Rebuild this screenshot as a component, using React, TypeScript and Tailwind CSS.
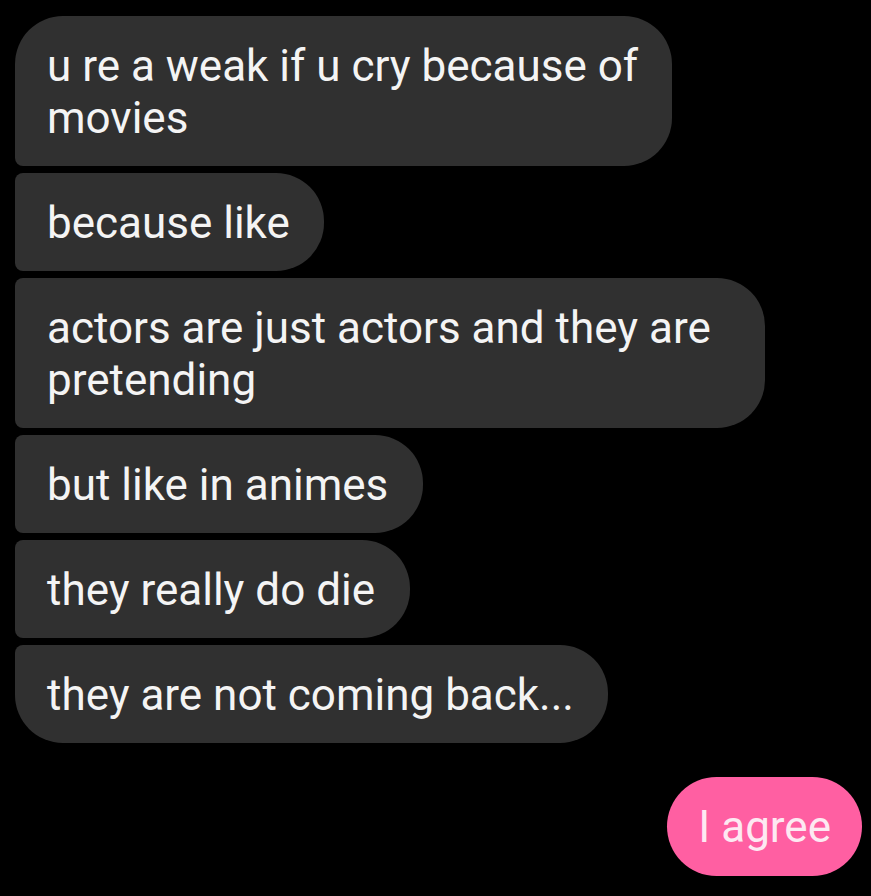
const incoming = [
  { lines: ['u re a weak if u cry because of', 'movies'], pos: 'first', pr: 'pr-[34px]' },
  { lines: ['because like'], pos: 'mid', pr: 'pr-[34px]' },
  { lines: ['actors are just actors and they are', 'pretending'], pos: 'mid', pr: 'pr-[54px]' },
  { lines: ['but like in animes'], pos: 'mid', pr: 'pr-[35px]' },
  { lines: ['they really do die'], pos: 'mid', pr: 'pr-[35px]' },
  { lines: ["they are not coming back..."], pos: 'last', pr: 'pr-[34px]' },
];

const corners: Record<string, string> = {
  first: 'rounded-tl-[48px] rounded-r-[48px] rounded-bl-[8px]',
  mid: 'rounded-l-[8px] rounded-r-[48px]',
  last: 'rounded-tl-[8px] rounded-r-[48px] rounded-bl-[48px]',
};

export default function App() {
  return (
    <div
      className="min-h-[896px] w-[871px] bg-black px-[15px] pt-[16px]"
      style={{ fontFamily: 'Roboto, "Noto Sans", sans-serif' }}
    >
      <div className="flex flex-col items-start gap-[7px]">
        {incoming.map((m, i) => (
          <div
            key={i}
            className={`w-fit bg-[#303030] pl-[32px] ${m.pr} pt-[24px] pb-[22px] text-[44px] leading-[52px] text-[#f4f4f4] ${corners[m.pos]}`}
          >
            {m.lines.map((l, j) => (
              <div key={j} className="whitespace-nowrap">
                {l}
              </div>
            ))}
          </div>
        ))}
      </div>
      <div className="mt-[34px] flex justify-end">
        <div className="mr-[-6px] rounded-full bg-[#ff5fa2] px-[31px] pt-[24px] pb-[23px] text-[44px] leading-[52px] text-[#fde9f2]">
          I agree
        </div>
      </div>
    </div>
  );
}
